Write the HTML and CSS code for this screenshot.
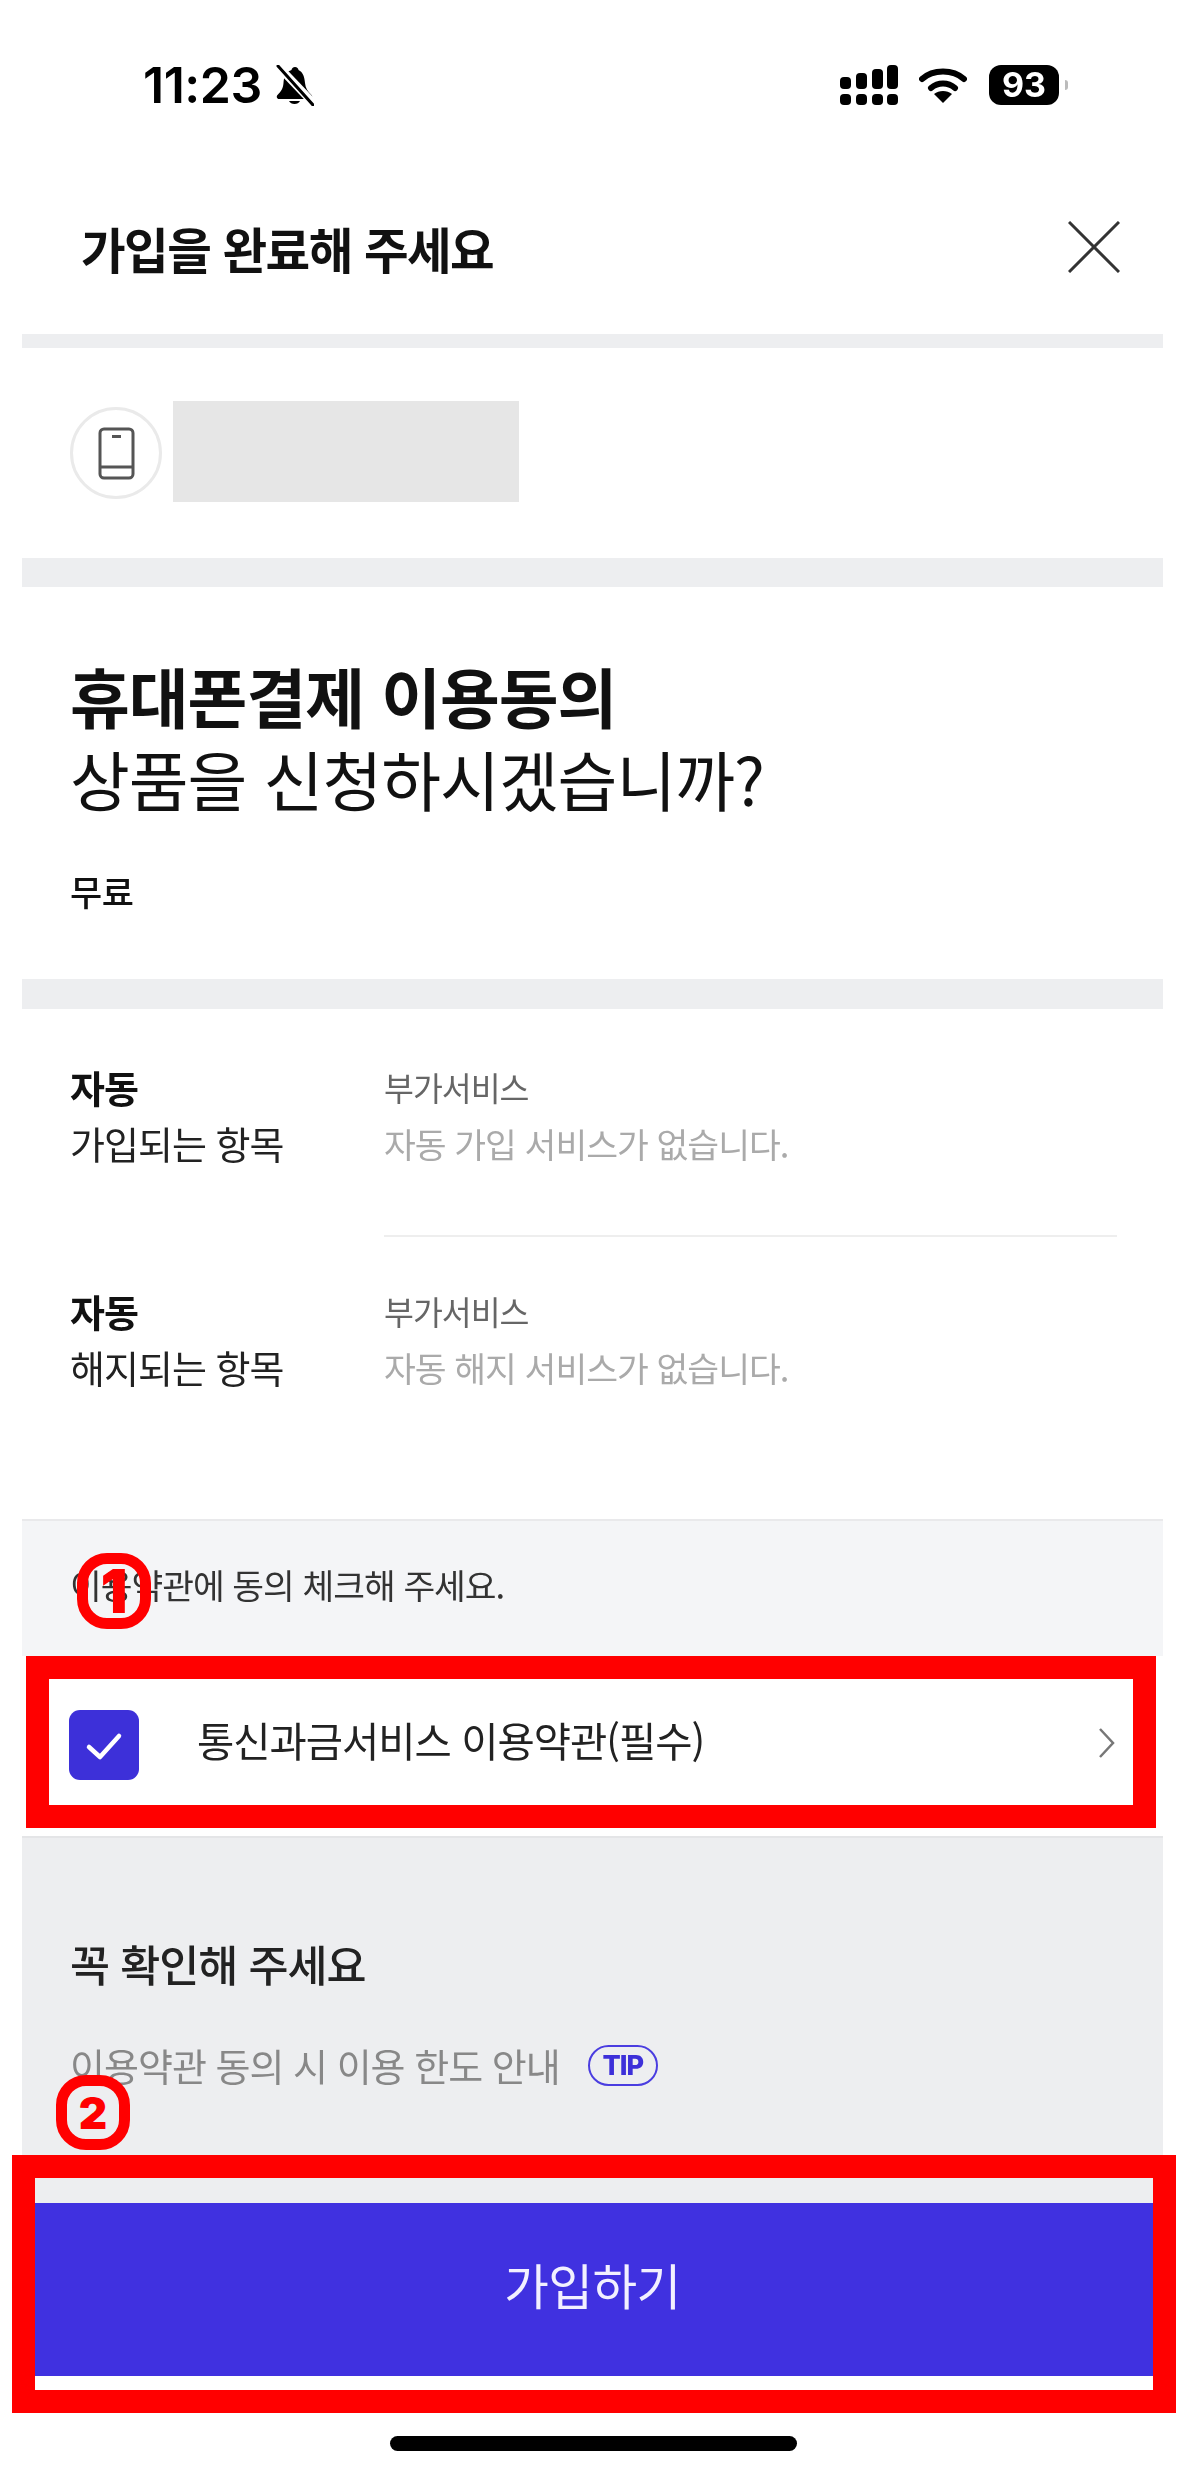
FILE: index.html
```html
<!DOCTYPE html>
<html lang="ko">
<head>
<meta charset="utf-8">
<title>가입을 완료해 주세요</title>
<link rel="stylesheet" href="styles.css">
</head>
<body>
<div class="page">
  <div class="status-bar">
    <div class="status-left">
      <span class="time">11:23</span>
      <svg class="bell" viewBox="0 0 39 41"><path d="M20 2c-2 0-3.500 1.500-3.500 3C10 7 9 12 8.500 18c-.4 5-2 8-6 12-1.500 1.500-.5 4 1.500 4h31c2 0 3-2.500 1.500-4-4-4-6-7-6.500-12C29.500 12 28 7 23.500 5 23.500 3.500 22 2 20 2z" fill="#000"/><path d="M14 36a6 5 0 0 0 11 0z" fill="#000"/><path d="M1 -1 L41 41" stroke="#fff" stroke-width="8"/><path d="M3 1 L38 40" stroke="#000" stroke-width="3" stroke-linecap="round"/></svg>
    </div>
    <div class="status-right">
      <svg class="signal" viewBox="0 0 58 40"><g fill="#000"><rect x="0" y="12" width="11" height="12" rx="4"/><rect x="16" y="8" width="11" height="16" rx="4"/><rect x="32" y="4" width="11" height="20" rx="4"/><rect x="47" y="0" width="11" height="24" rx="4"/><rect x="0" y="29" width="11" height="11" rx="4"/><rect x="16" y="29" width="11" height="11" rx="4"/><rect x="32" y="29" width="11" height="11" rx="4"/><rect x="47" y="29" width="11" height="11" rx="4"/></g></svg>
      <svg class="wifi" viewBox="0 0 48 36"><path d="M3 12C14 2 34 2 45 12" fill="none" stroke="#000" stroke-width="6" stroke-linecap="round"/><path d="M12 21C19 15 29 15 36 21" fill="none" stroke="#000" stroke-width="6" stroke-linecap="round"/><path d="M24 36L15 27C20 23 28 23 33 27z" fill="#000"/></svg>
      <div class="battery"><span class="battery-level">93</span><span class="battery-cap"></span></div>
    </div>
  </div>

  <header class="header">
    <h1 class="header-title">가입을 완료해 주세요</h1>
    <svg class="close" viewBox="0 0 52 52"><path d="M1 1L51 51M51 1L1 51" stroke="#333" stroke-width="3" fill="none"/></svg>
  </header>

  <div class="sep sep-thin"></div>

  <section class="phone-row">
    <div class="phone-circle">
      <svg class="phone-icon" viewBox="0 0 37 53"><rect x="2" y="2" width="33" height="49" rx="4" fill="none" stroke="#555" stroke-width="3"/><path d="M2 40H35" stroke="#555" stroke-width="3"/><path d="M14 9.500H23" stroke="#555" stroke-width="3"/></svg>
    </div>
    <div class="phone-mask"></div>
  </section>

  <div class="sep sep-thick"></div>

  <section class="summary">
    <h2 class="summary-title"><strong>휴대폰결제 이용동의</strong><br>상품을 신청하시겠습니까?</h2>
    <p class="price">무료</p>
  </section>

  <div class="sep sep-mid"></div>

  <section class="auto">
    <div class="auto-row">
      <div class="auto-label"><strong>자동</strong><br>가입되는 항목</div>
      <div class="auto-value"><div class="value-head">부가서비스</div><div class="value-body">자동 가입 서비스가 없습니다.</div></div>
    </div>
    <div class="auto-divider"></div>
    <div class="auto-row">
      <div class="auto-label"><strong>자동</strong><br>해지되는 항목</div>
      <div class="auto-value"><div class="value-head">부가서비스</div><div class="value-body">자동 해지 서비스가 없습니다.</div></div>
    </div>
  </section>

  <section class="agree-head"><span class="soft">이용약관에 동의 체크해 주세요.</span></section>

  <section class="agree-row">
    <span class="checkbox"><svg viewBox="0 0 70 70"><path d="M20 37L31 47L50 26" fill="none" stroke="#fff" stroke-width="4.500" stroke-linecap="round" stroke-linejoin="round"/></svg></span>
    <span class="agree-text">통신과금서비스 이용약관(필수)</span>
    <svg class="chevron" viewBox="0 0 17 30"><path d="M2 1L15 15L2 29" fill="none" stroke="#777" stroke-width="2.500"/></svg>
  </section>

  <section class="notice">
    <h3 class="notice-title">꼭 확인해 주세요</h3>
    <div class="notice-line"><span>이용약관 동의 시 이용 한도 안내</span><span class="tip">TIP</span></div>
  </section>

  <button class="submit"><span class="soft">가입하기</span></button>

  <div class="home-area"><div class="home-indicator"></div></div>

  <div class="mark-box mark-box-one"></div>
  <div class="mark-box mark-box-two"></div>
  <div class="mark-num mark-num-one">1</div>
  <div class="mark-num mark-num-two">2</div>
</div>
</body>
</html>
```

FILE: styles.css
```css
* { box-sizing: border-box; }
html, body { margin: 0; padding: 0; background: #fff; }
body { font-family: "Noto Sans CJK KR", "Noto Sans", sans-serif; color: #111; }
.page { position: relative; width: 1177px; height: 2475px; overflow: hidden; background: #fff; }
h1, h2, h3, p { margin: 0; font-weight: 400; }

/* the reference is an upscaled capture: its content is slightly soft */
.status-left, .status-right, .header, .phone-circle, .summary, .auto, .soft, .checkbox, .agree-text, .chevron, .notice-title, .notice-line { filter: blur(0.6px); }
.soft { display: inline-block; }

/* status bar */
.status-bar { height: 170px; padding: 65px 109px 0 143px; display: flex; justify-content: space-between; align-items: flex-start; }
.status-left { display: flex; align-items: center; height: 41px; gap: 13px; }
.time { font-family: Inter, sans-serif; font-weight: 600; font-size: 50px; line-height: 41px; letter-spacing: -0.5px; color: #000; }
.bell { width: 39px; height: 41px; display: block; }
.status-right { display: flex; align-items: flex-start; }
.signal { width: 58px; height: 40px; display: block; }
.wifi { width: 48px; height: 36px; display: block; margin: 2px 22px 0 21px; }
.battery { display: flex; align-items: center; }
.battery-level { width: 70px; height: 40px; border-radius: 12px; background: #000; color: #fff; font-family: Inter, sans-serif; font-weight: 700; font-size: 34px; line-height: 40px; text-align: center; }
.battery-cap { width: 3px; height: 10px; margin-left: 6px; background: #bbb; border-radius: 0 3px 3px 0; }

/* header */
.header { height: 164px; padding: 51px 57px 0 81px; display: flex; justify-content: space-between; align-items: flex-start; }
.header-title { font-size: 48.500px; font-weight: 700; line-height: 60px; margin-top: -3px; letter-spacing: -1.500px; color: #111; }
.close { width: 52px; height: 52px; display: block; }

/* separators */
.sep { margin: 0 14px 0 22px; background: #edeef0; }
.sep-thin { height: 14px; }
.sep-thick { height: 29px; }
.sep-mid { height: 30px; }

/* phone row */
.phone-row { height: 210px; padding: 53px 0 0 70px; display: flex; align-items: flex-start; }
.phone-circle { width: 92px; height: 92px; margin: 6px 11px 0 0; border: 3px solid #eaeaea; border-radius: 50%; display: flex; align-items: center; justify-content: center; }
.phone-icon { width: 37px; height: 53px; display: block; }
.phone-mask { width: 346px; height: 101px; background: #e6e6e6; }

/* summary */
.summary { height: 392px; padding: 67px 0 0 70px; }
.summary-title { font-size: 65px; line-height: 83px; letter-spacing: -1px; color: #111; }
.summary-title strong { font-weight: 700; }
.price { margin-top: 48px; font-size: 35px; line-height: 46px; font-weight: 500; letter-spacing: -0.500px; }

/* auto section */
.auto { height: 510px; padding: 50px 60px 0 70px; }
.auto-row { display: flex; }
.auto-label { width: 314px; font-size: 38px; line-height: 56px; letter-spacing: -1px; color: #222; }
.auto-label strong { font-weight: 700; color: #111; }
.auto-value { flex: 1; }
.value-head { font-size: 32.500px; line-height: 56px; color: #666; letter-spacing: -1px; }
.value-body { font-size: 34.600px; line-height: 56px; color: #aaa; letter-spacing: -1px; }
.auto-divider { height: 2px; margin: 64px 0 46px 314px; background: #eeeeee; }

/* agree */
.agree-head { margin: 0 14px 0 22px; height: 137px; padding: 40px 0 0 48px; background: #f4f5f7; border-top: 2px solid #e9e9eb; font-size: 34.500px; line-height: 46px; letter-spacing: -1px; color: #333; }
.agree-row { height: 180px; padding: 54px 62px 0 69px; display: flex; align-items: flex-start; background: #fff; }
.checkbox { width: 70px; height: 70px; border-radius: 11px; background: #3d30d9; display: block; }
.checkbox svg { width: 70px; height: 70px; display: block; }
.agree-text { margin: 2px 0 0 58px; flex: 1; font-size: 40.500px; line-height: 56px; letter-spacing: -1px; color: #222; }
.chevron { width: 17px; height: 30px; margin-top: 18px; display: block; }

/* notice */
.notice { margin: 0 14px 0 22px; height: 367px; padding: 96px 0 0 48px; background: #edeef0; border-top: 2px solid #e4e5e7; }
.notice-title { font-size: 43.500px; line-height: 60px; letter-spacing: -1px; font-weight: 500; color: #222; }
.notice-line { margin-top: 43px; display: flex; align-items: center; font-size: 38px; line-height: 56px; letter-spacing: -1px; color: #888; }
.tip { margin-left: 28px; width: 70px; height: 41px; border: 2px solid #4a3de0; border-radius: 21px; font-family: Inter, sans-serif; font-weight: 800; font-size: 27px; line-height: 37px; text-align: center; color: #3d30d9; letter-spacing: -1px; }

/* submit */
.submit { display: block; width: 1141px; height: 173px; margin: 0 14px 0 22px; border: 0; padding: 0 0 12px; background: #4031e0; color: #f2f0ff; font-family: inherit; font-size: 48.500px; letter-spacing: -0.500px; }

/* home */
.home-area { padding: 60px 0 0 390px; }
.home-indicator { width: 407px; height: 15px; border-radius: 8px; background: #000; }

/* red annotations over the screenshot */
.mark-box { position: absolute; border: 23px solid #f00; }
.mark-box-one { left: 26px; top: 1656px; width: 1130px; height: 172px; }
.mark-box-two { left: 12px; top: 2155px; width: 1164px; height: 258px; }
.mark-num { position: absolute; border: 11px solid #f00; border-radius: 30px; color: #f00; font-family: Inter, sans-serif; font-weight: 900; display: flex; align-items: center; justify-content: center; }
.mark-num-one { left: 77px; top: 1553px; width: 74px; height: 76px; font-size: 60px; }
.mark-num-two { left: 56px; top: 2075px; width: 74px; height: 75px; font-size: 44px; }
```
